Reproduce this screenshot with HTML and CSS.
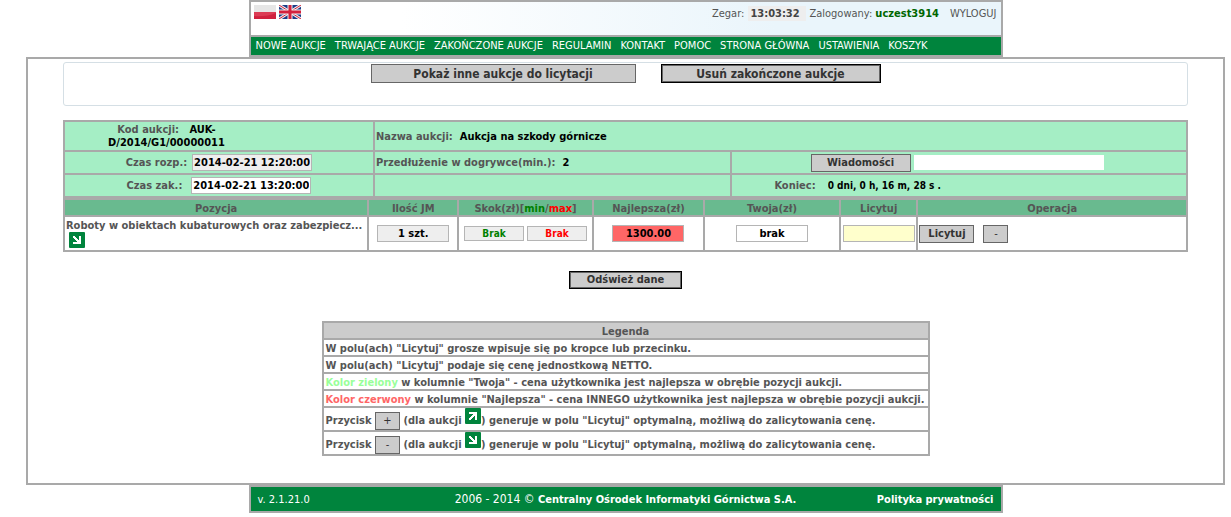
FILE: index.html
```html
<!DOCTYPE html>
<html lang="pl">
<head>
<meta charset="utf-8">
<title>Aukcja na szkody górnicze</title>
<link rel="stylesheet" href="styles.css">
</head>
<body>
<svg class="defs" width="0" height="0" aria-hidden="true">
  <symbol id="arrow-down" viewBox="0 0 16 16">
    <rect width="16" height="16" rx="1" fill="#00843d"/>
    <path d="M4 4h2v1h1v1h1v1h1v1h1v-4h2v8h-8v-2h4v-1h-1v-1h-1v-1h-1v-1h-1z" fill="#fff"/>
  </symbol>
  <symbol id="arrow-up" viewBox="0 0 16 16">
    <rect width="16" height="16" rx="1" fill="#00843d"/>
    <path d="M4 12h2v-1h1v-1h1v-1h1v-1h1v4h2v-8h-8v2h4v1h-1v1h-1v1h-1v1h-1z" fill="#fff"/>
  </symbol>
</svg>

<header class="frame top">
  <div class="top-bar">
    <div class="flags">
      <a href="#" aria-label="Polski"><svg class="flag" viewBox="0 0 22 14"><rect width="22" height="7" fill="#e6e6e6"/><rect y="7" width="22" height="7" fill="#dc3c55"/><path d="M0 11Q12 12 22 8V14H0z" fill="#d0213e"/></svg></a>
      <a href="#" aria-label="English"><svg class="flag" viewBox="0 0 22 14"><rect width="22" height="14" fill="#1c3a86"/><path d="M0 0L22 14M22 0L0 14" stroke="#eee" stroke-width="3"/><path d="M0 0L22 14M22 0L0 14" stroke="#d4213d" stroke-width="1"/><path d="M11 0V14M0 7H22" stroke="#eee" stroke-width="5"/><path d="M11 0V14M0 7H22" stroke="#d4213d" stroke-width="3"/></svg></a>
    </div>
    <div class="session">
      <label for="clock">Zegar:</label>
      <input id="clock" class="clock" value="13:03:32" readonly>
      <span>Zalogowany: <b class="user">uczest3914</b></span>
      <a class="logout" href="#">WYLOGUJ</a>
    </div>
  </div>
  <nav class="menu">
    <a href="#">NOWE AUKCJE</a>
    <a href="#">TRWAJĄCE AUKCJE</a>
    <a href="#">ZAKOŃCZONE AUKCJE</a>
    <a href="#">REGULAMIN</a>
    <a href="#">KONTAKT</a>
    <a href="#">POMOC</a>
    <a href="#">STRONA GŁÓWNA</a>
    <a href="#">USTAWIENIA</a>
    <a href="#">KOSZYK</a>
  </nav>
</header>

<main class="content">
  <div class="actions">
    <button class="btn large show" type="button">Pokaż inne aukcje do licytacji</button>
    <button class="btn large remove default" type="button">Usuń zakończone aukcje</button>
  </div>

  <table class="grid info">
    <colgroup><col class="c-code"><col class="c-name"><col class="c-msg"></colgroup>
    <tr class="tall">
      <td><div class="code">Kod aukcji: &nbsp; <b>AUK-<br>D/2014/G1/00000011</b></div></td>
      <td colspan="2">Nazwa aukcji: &nbsp;<b>Aukcja na szkody górnicze</b></td>
    </tr>
    <tr>
      <td><div class="field"><label for="start">Czas rozp.:</label><input id="start" class="box date grey" value="2014-02-21 12:20:00" readonly></div></td>
      <td>Przedłużenie w dogrywce(min.): &nbsp;<b>2</b></td>
      <td><div class="message"><button class="btn wide" type="button">Wiadomości</button><input class="message-text" aria-label="Wiadomość"></div></td>
    </tr>
    <tr>
      <td><div class="field end"><label for="end">Czas zak.:</label><input id="end" class="box date" value="2014-02-21 13:20:00" readonly></div></td>
      <td></td>
      <td><div class="left-time"><label for="left">Koniec:</label><input id="left" class="remaining" value="0 dni, 0 h, 16 m, 28 s ." readonly></div></td>
    </tr>
  </table>

  <table class="grid items">
    <colgroup><col class="c-item"><col class="c-qty"><col class="c-step"><col class="c-best"><col class="c-own"><col class="c-bid"><col class="c-op"></colgroup>
    <tr>
      <th>Pozycja</th>
      <th>Ilość JM</th>
      <th>Skok(zł)[<span class="green">min</span>/<span class="red">max</span>]</th>
      <th>Najlepsza(zł)</th>
      <th>Twoja(zł)</th>
      <th>Licytuj</th>
      <th>Operacja</th>
    </tr>
    <tr class="bid-row">
      <td class="item"><div>Roboty w obiektach kubaturowych oraz zabezpiecz...</div><svg class="arrow"><use href="#arrow-down"/></svg></td>
      <td><input class="box value grey" value="1 szt." aria-label="Ilość JM" readonly></td>
      <td><div class="steps"><input class="box step grey green" value="Brak" aria-label="Skok min" readonly><input class="box step grey red" value="Brak" aria-label="Skok max" readonly></div></td>
      <td><input class="box value best" value="1300.00" aria-label="Najlepsza" readonly></td>
      <td><input class="box value" value="brak" aria-label="Twoja" readonly></td>
      <td><input class="box value bid" aria-label="Licytuj"></td>
      <td><div class="ops"><button class="btn bid-btn" type="button">Licytuj</button><button class="btn sign" type="button">-</button></div></td>
    </tr>
  </table>

  <button class="btn default refresh" type="button">Odśwież dane</button>

  <table class="grid legend">
    <tr><th>Legenda</th></tr>
    <tr><td>W polu(ach) "Licytuj" grosze wpisuje się po kropce lub przecinku.</td></tr>
    <tr><td>W polu(ach) "Licytuj" podaje się cenę jednostkową NETTO.</td></tr>
    <tr><td><span class="light-green">Kolor zielony</span> w kolumnie "Twoja" - cena użytkownika jest najlepsza w obrębie pozycji aukcji.</td></tr>
    <tr><td><span class="light-red">Kolor czerwony</span> w kolumnie "Najlepsza" - cena INNEGO użytkownika jest najlepsza w obrębie pozycji aukcji.</td></tr>
    <tr class="key"><td>Przycisk <button class="btn sign" type="button">+</button> (dla aukcji <svg class="arrow"><use href="#arrow-up"/></svg>) generuje w polu "Licytuj" optymalną, możliwą do zalicytowania cenę.</td></tr>
    <tr class="key"><td>Przycisk <button class="btn sign" type="button">-</button> (dla aukcji <svg class="arrow"><use href="#arrow-down"/></svg>) generuje w polu "Licytuj" optymalną, możliwą do zalicytowania cenę.</td></tr>
  </table>
</main>

<footer class="frame bottom">
  <span>v. 2.1.21.0</span>
  <span class="copyright">2006 - 2014 © <b>Centralny Ośrodek Informatyki Górnictwa S.A.</b></span>
  <a href="#">Polityka prywatności</a>
</footer>
</body>
</html>
```

FILE: styles.css
```css
* { box-sizing: border-box; }

body {
  margin: 0;
  padding: 0 6px 0 26px;
  background: #fff;
  color: #555;
  font: 11px/13px "DejaVu Sans Condensed", Tahoma, sans-serif;
}

input, button { margin: 0; font: inherit; }
a { color: inherit; text-decoration: none; }
.defs { position: absolute; }

.frame {
  max-width: 754px;
  margin: 0 auto;
  border: 2px solid #a9a9a9;
}

.top-bar {
  display: flex;
  justify-content: space-between;
  height: 35px;
  padding: 3px 4px 0 3px;
  border-bottom: 2px solid #a9a9a9;
  background: linear-gradient(to right, #fff 20%, #eaf5fb 70%);
}
.flags { display: flex; gap: 3px; }
.flag { display: block; width: 22px; height: 14px; }
.session {
  display: flex;
  align-items: center;
  height: 17px;
}
.clock {
  width: 58px;
  height: 15px;
  margin: 0 3px 0 4px;
  padding: 0 2px;
  border: 0;
  background: #eee;
  color: #444;
  font-weight: bold;
}
.user { color: #060; }
.logout { margin-left: 11px; }

.menu {
  display: flex;
  gap: 9px;
  height: 18px;
  padding-left: 5px;
  background: #00843d;
  color: #fff;
  line-height: 17px;
  white-space: nowrap;
}

.content {
  padding: 3px 35px 27px;
  border: 2px solid #a9a9a9;
  font-weight: bold;
}

.actions {
  display: flex;
  justify-content: center;
  gap: 25px;
  height: 44px;
  margin-bottom: 14px;
  padding-top: 1px;
  border: 1px solid #d5dfe5;
  border-radius: 3px;
}

.btn {
  height: 18px;
  padding: 0;
  border: 1px solid #666;
  background: #ccc;
  color: #333;
  font-weight: bold;
  line-height: 14px;
}
.btn.default { border-color: #000; box-shadow: inset 0 0 0 1px #666; }
.large { height: 19px; font-size: 12px; }
.show { width: 265px; }
.remove { width: 220px; }
.wide { width: 100px; }
.bid-btn { width: 55px; }
.sign { width: 25px; font-weight: normal; }
.refresh { display: block; width: 113px; margin: 19px auto 32px; }

.grid { border-collapse: collapse; }
.grid td, .grid th { padding: 0 1px; border: 2px solid #a9a9a9; }
.info, .items { width: 100%; table-layout: fixed; }

.info td { background: #a5eec5; }
.info tr { height: 23px; }
.info .tall { height: 30px; }
.info b { color: #000; }
.c-code { width: 27.6%; }
.c-name { width: 31.8%; }
.code { margin-right: 105px; text-align: center; }
.field, .message, .left-time {
  display: flex;
  align-items: center;
  justify-content: center;
  gap: 5px;
}

.box {
  height: 17px;
  padding: 0 1px;
  border: 1px solid #b5b5b5;
  background: #fff;
  color: #000;
  font-weight: bold;
  text-align: center;
}
.box.grey { background: #eee; }
.date { width: 120px; }
.field.end { gap: 9px; }
.message { gap: 3px; padding-right: 4px; }
.message-text { width: 190px; height: 15px; border: 0; background: #fff; }
.left-time { gap: 10px; }
.remaining {
  width: 318px;
  height: 15px;
  border: 0;
  background: transparent;
  color: #000;
  font-size: 10px;
  font-weight: bold;
}

.items th { background: #69ba8f; }
.items tr { height: 17px; }
.grid.items th, .grid.items .item, .legend tr:not(.key) > * { padding-top: 2px; }
.items .bid-row { height: 35px; }
.bid-row td { text-align: center; }
.bid-row .item { text-align: left; vertical-align: top; white-space: nowrap; }
.c-item { width: 27.1%; }
.c-qty { width: 8%; }
.c-step { width: 12%; }
.c-best { width: 9.9%; }
.c-own { width: 12.1%; }
.c-bid { width: 6.9%; }
.value { width: 72px; }
.step { width: 60px; height: 15px; font-size: 10px; }
.steps { display: flex; justify-content: center; gap: 3px; }
.ops { display: flex; gap: 9px; }
.box.best { background: #f66; }
.box.bid { background: #ffc; }
.green, .box.green { color: #008000; }
.red, .box.red { color: #f00; }
.arrow { width: 16px; height: 16px; }
.item .arrow { display: block; margin-left: 3px; }

.legend { min-width: 608px; margin: 0 auto; }
.grid.legend td { padding-left: 2px; }
.legend th { background: #ccc; }
.legend tr { height: 17px; }
.legend .key { height: 24px; }
.light-green { color: #9f9; }
.light-red { color: #f66; }

.bottom {
  display: grid;
  grid-template-columns: 1fr auto 1fr;
  align-items: center;
  height: 28px;
  padding: 0 7px;
  background: #00843d;
  color: #fff;
}
.bottom a { justify-self: end; font-weight: bold; }
.copyright { font-size: 12px; }
.copyright b { font-size: 11px; }
```
